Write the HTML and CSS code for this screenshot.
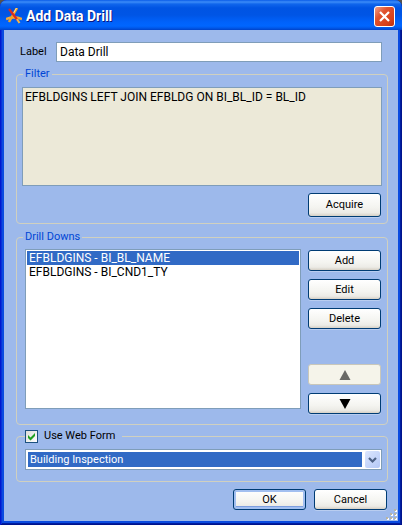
FILE: index.html
```html
<!DOCTYPE html>
<html lang="en">
<head>
    <meta charset="UTF-8">
    <meta name="viewport" content="width=device-width, initial-scale=1.0">
    <title>Add Data Drill</title>
    <link rel="stylesheet" href="styles.css">
</head>
<body>
    <div class="window">
        <header class="title-bar">
            <svg class="app-icon" width="16" height="16" viewBox="0 0 16 16" aria-hidden="true">
                <path d="M0 11 Q8 8 16 11" fill="none" stroke="#f0a838" stroke-width="2.5"/>
                <path d="M11 0 L3 14" stroke="#f3a428" stroke-width="2.5"/>
                <path d="M10.500 0 L7 6" stroke="#fbdc9a" stroke-width="1"/>
                <path d="M3 1 L11.500 12" stroke="#d82c20" stroke-width="2.2"/>
                <path d="M11 11 L13.500 15" stroke="#f3b448" stroke-width="2"/>
            </svg>
            <h1>Add Data Drill</h1>
            <button type="button" class="close-btn" aria-label="Close">
                <svg width="19" height="19" viewBox="0 0 19 19" aria-hidden="true">
                    <path d="M5 5 L14 14 M14 5 L5 14" stroke="#fff" stroke-width="2.2"/>
                </svg>
            </button>
        </header>

        <form class="content">
            <div class="label-row">
                <label for="drill_label">Label</label>
                <input type="text" id="drill_label" name="drill_label" value="Data Drill">
            </div>

            <fieldset class="filter-group">
                <legend>Filter</legend>
                <textarea id="filter" name="filter" aria-label="Filter" readonly>EFBLDGINS LEFT JOIN EFBLDG ON BI_BL_ID = BL_ID</textarea>
                <button type="button" class="btn btn-tall">Acquire</button>
            </fieldset>

            <fieldset class="drill-group">
                <legend>Drill Downs</legend>
                <div class="drill-row">
                    <select class="drill-list" name="drill_downs" size="10" aria-label="Drill Downs">
                        <option selected>EFBLDGINS - BI_BL_NAME</option>
                        <option>EFBLDGINS - BI_CND1_TY</option>
                    </select>
                    <div class="drill-buttons">
                        <button type="button" class="btn">Add</button>
                        <button type="button" class="btn">Edit</button>
                        <button type="button" class="btn">Delete</button>
                        <button type="button" class="btn move-up" aria-label="Move up" disabled>
                            <svg width="12" height="10" viewBox="0 0 12 10" aria-hidden="true"><path d="M6 0 L11.500 10 H0.500 Z" fill="#6a6a66"/></svg>
                        </button>
                        <button type="button" class="btn" aria-label="Move down">
                            <svg width="12" height="10" viewBox="0 0 12 10" aria-hidden="true"><path d="M6 10 L11.500 0 H0.500 Z" fill="#000"/></svg>
                        </button>
                    </div>
                </div>
            </fieldset>

            <fieldset class="form-group">
                <legend>
                    <input type="checkbox" id="use_form" name="use_form" checked>
                    <label for="use_form" id="use_form_label">Use Web Form</label>
                </legend>
                <div class="combo">
                    <select name="web_form" aria-labelledby="use_form_label">
                        <option>Building Inspection</option>
                    </select>
                    <svg class="combo-arrow" width="15" height="17" viewBox="0 0 15 17" aria-hidden="true">
                        <path d="M4 7 L7.500 10.500 L11 7" fill="none" stroke="#4d6185" stroke-width="2.2"/>
                    </svg>
                </div>
            </fieldset>

            <div class="footer">
                <button type="submit" class="btn btn-default">OK</button>
                <button type="button" class="btn">Cancel</button>
            </div>
        </form>

        <svg class="grip" width="11" height="11" viewBox="0 0 11 11" aria-hidden="true">
            <path d="M9 1h2v2h-2z M5 5h2v2h-2z M9 5h2v2h-2z M1 9h2v2h-2z M5 9h2v2h-2z M9 9h2v2h-2z" fill="#fff"/>
            <path d="M8 0h2v2h-2z M4 4h2v2h-2z M8 4h2v2h-2z M0 8h2v2h-2z M4 8h2v2h-2z M8 8h2v2h-2z" fill="#b8b4a2"/>
        </svg>
    </div>
    <script>
        document.querySelector(".content").addEventListener("submit", function(event) {
            event.preventDefault();
        });
    </script>
</body>
</html>
```

FILE: styles.css
```css
/* Reset & Base Styles */
* {
    box-sizing: border-box;
    margin: 0;
    padding: 0;
}

body {
    background: #55534e;
    font-family: Roboto, "Liberation Sans", sans-serif;
    font-size: 11px;
    line-height: 14px;
    color: #000;
}

input,
select,
textarea,
button {
    font: inherit;
    color: inherit;
    border-radius: 0;
    outline: none;
}

/* Window */
.window {
    position: relative;
    display: flex;
    flex-direction: column;
    min-height: 100vh;
    padding: 0 4px 4px;
    border-radius: 7px 7px 0 0;
    background: #0a4be0;
    box-shadow: inset 1px 0 #0019cf, inset -1px -1px #00138c, inset 2px 0 #0831d9, inset -2px -2px #001ea0;
    overflow: hidden;
}

.title-bar {
    display: flex;
    align-items: center;
    height: 30px;
    margin: 0 -4px;
    padding: 2px 7px 0 6px;
    background: linear-gradient(#0a5ce8 0, #3c8cf8 2px, #1066ec 4px, #0054e3 8px, #0055e5 15px, #0062fb 22px, #0066ff 26px, #0058ea 28px, #0042c8 30px);
}

.title-bar h1 {
    flex: 1;
    margin-left: 4px;
    font-size: 14px;
    line-height: 16px;
    font-weight: bold;
    color: #fff;
    text-shadow: 1px 1px #0a1883;
}

.close-btn {
    display: flex;
    width: 21px;
    height: 21px;
    border: 1px solid #fff;
    border-radius: 3px;
    background: linear-gradient(135deg, #f0a08a, #e0532f 35%, #d8401a 75%, #b83010);
}

/* Form */
.content {
    flex: 1;
    padding: 12px 10px 11px 12px;
    background: #9db9eb;
}

.label-row {
    display: flex;
    align-items: center;
    gap: 8px;
    padding: 0 6px 0 4px;
}

.label-row label {
    width: 28px;
}

.label-row input {
    flex: 1;
    min-width: 0;
    height: 20px;
    padding: 0 3px;
    border: 1px solid #7f9db9;
    background: #fff;
    font-size: 12px;
}

fieldset {
    min-width: 0;
    border: 1px solid #d0d0bf;
    border-radius: 4px;
}

legend {
    height: 14px;
    margin-left: 1px;
    padding: 0 2px;
    color: #0046d5;
}

/* Filter */
.filter-group {
    margin-top: 5px;
    padding: 6px 5px;
}

.filter-group textarea {
    display: block;
    width: 100%;
    height: 99px;
    padding: 2px;
    border: 1px solid #7f9db9;
    background: #ece9d8;
    font-size: 12px;
    resize: none;
}

.filter-group .btn {
    margin-top: 7px;
    margin-left: auto;
}

/* Buttons */
.btn {
    display: flex;
    align-items: center;
    justify-content: center;
    width: 73px;
    height: 21px;
    margin-right: 1px;
    border: 1px solid #003c74;
    border-radius: 3px;
    background: linear-gradient(#fff, #f4f4f0 60%, #ecebe6 85%, #d6d0c5);
    box-shadow: 0 1px #b9cdf0;
}

.btn-tall {
    height: 24px;
}

.btn-default {
    box-shadow: inset 0 0 0 2px #a2bff0, inset 0 -3px #7e9fe0;
}

.btn:disabled {
    border-color: #c9c7ba;
    background: #f5f4ea;
    box-shadow: none;
}

/* Drill Downs */
.drill-group {
    margin-top: 6px;
    padding: 5px 5px 10px 8px;
}

.drill-group legend {
    margin-left: -2px;
}

.drill-row {
    display: flex;
    align-items: flex-start;
    gap: 7px;
}

.drill-list {
    flex: 1;
    min-width: 0;
    height: 160px;
    padding: 1px;
    border: 1px solid #7f9db9;
    background: #fff;
    font-size: 12px;
    overflow: hidden;
}

.drill-list option {
    min-height: 13px;
    padding: 0 2px;
    line-height: 13px;
}

.drill-list option:checked {
    background: linear-gradient(#316ac5, #316ac5);
    color: #fff;
    -webkit-text-fill-color: #fff;
}

.drill-buttons {
    display: flex;
    flex-direction: column;
    gap: 8px;
    padding-top: 1px;
}

.move-up {
    margin-top: 27px;
}

/* Web Form */
.form-group {
    margin-top: 4px;
    padding: 6px 5px 11px 8px;
}

.form-group legend {
    display: flex;
    align-items: center;
    gap: 6px;
    margin-left: 0;
    padding: 0 7px 0 0;
    color: #000;
}

.form-group input {
    appearance: none;
    width: 13px;
    height: 13px;
    border: 1px solid #1c5180;
    background: linear-gradient(135deg, #dcdcd7, #fff);
}

.form-group input:checked {
    background-image: url("data:image/svg+xml,%3Csvg xmlns='http://www.w3.org/2000/svg' viewBox='0 0 11 11'%3E%3Cpath d='M2 4v3L4.500 9.500 9 5v-3L4.500 6.500z' fill='%2321a121'/%3E%3C/svg%3E"), linear-gradient(135deg, #dcdcd7, #fff);
}

.combo {
    position: relative;
    height: 21px;
    padding: 2px 19px 2px 2px;
    border: 1px solid #7f9db9;
    background: #fff;
}

.combo select {
    display: block;
    appearance: none;
    width: 100%;
    height: 15px;
    padding: 0 2px;
    border: none;
    background: #316ac5;
    color: #fff;
}

.combo-arrow {
    position: absolute;
    top: 1px;
    right: 1px;
    border-radius: 2px;
    background: linear-gradient(135deg, #dbe6fe, #b4c8f6);
    pointer-events: none;
}

/* Footer */
.footer {
    display: flex;
    justify-content: flex-end;
    gap: 7px;
    margin-top: 7px;
}

.grip {
    position: absolute;
    right: 5px;
    bottom: 5px;
}
```
